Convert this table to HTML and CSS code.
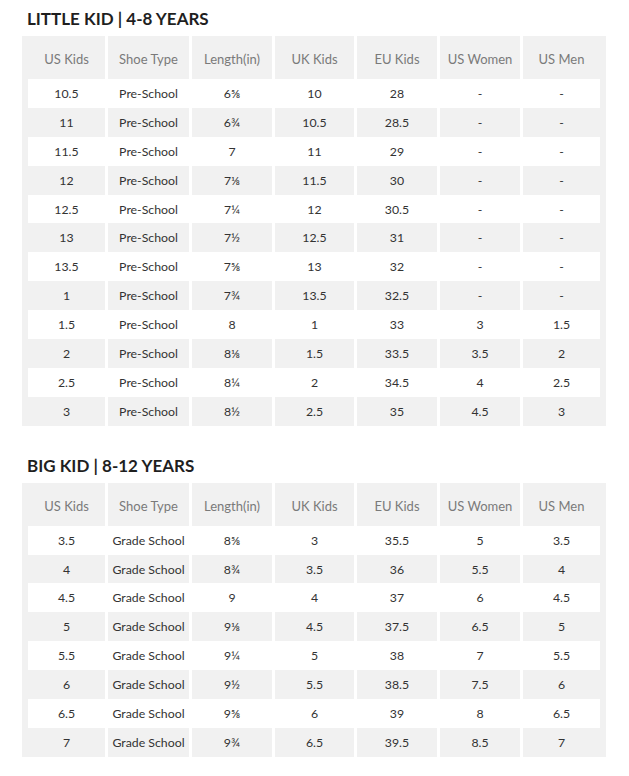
FILE: index.html
```html
<!DOCTYPE html>
<html lang="en">
<head>
<meta charset="utf-8">
<title>Kids Size Chart</title>
<link rel="stylesheet" href="styles.css">
</head>
<body>
<main class="page">
  <section class="chart">
    <h2 class="chart-title">LITTLE KID | 4-8 YEARS</h2>
    <div class="size-table">
      <div class="row head"><div class="cell">US Kids</div><div class="cell">Shoe Type</div><div class="cell">Length(in)</div><div class="cell">UK Kids</div><div class="cell">EU Kids</div><div class="cell">US Women</div><div class="cell">US Men</div></div>
      <div class="row light"><div class="cell">10.5</div><div class="cell">Pre-School</div><div class="cell">6⅝</div><div class="cell">10</div><div class="cell">28</div><div class="cell">-</div><div class="cell">-</div></div>
      <div class="row shade"><div class="cell">11</div><div class="cell">Pre-School</div><div class="cell">6¾</div><div class="cell">10.5</div><div class="cell">28.5</div><div class="cell">-</div><div class="cell">-</div></div>
      <div class="row light"><div class="cell">11.5</div><div class="cell">Pre-School</div><div class="cell">7</div><div class="cell">11</div><div class="cell">29</div><div class="cell">-</div><div class="cell">-</div></div>
      <div class="row shade"><div class="cell">12</div><div class="cell">Pre-School</div><div class="cell">7⅛</div><div class="cell">11.5</div><div class="cell">30</div><div class="cell">-</div><div class="cell">-</div></div>
      <div class="row light"><div class="cell">12.5</div><div class="cell">Pre-School</div><div class="cell">7¼</div><div class="cell">12</div><div class="cell">30.5</div><div class="cell">-</div><div class="cell">-</div></div>
      <div class="row shade"><div class="cell">13</div><div class="cell">Pre-School</div><div class="cell">7½</div><div class="cell">12.5</div><div class="cell">31</div><div class="cell">-</div><div class="cell">-</div></div>
      <div class="row light"><div class="cell">13.5</div><div class="cell">Pre-School</div><div class="cell">7⅝</div><div class="cell">13</div><div class="cell">32</div><div class="cell">-</div><div class="cell">-</div></div>
      <div class="row shade"><div class="cell">1</div><div class="cell">Pre-School</div><div class="cell">7¾</div><div class="cell">13.5</div><div class="cell">32.5</div><div class="cell">-</div><div class="cell">-</div></div>
      <div class="row light"><div class="cell">1.5</div><div class="cell">Pre-School</div><div class="cell">8</div><div class="cell">1</div><div class="cell">33</div><div class="cell">3</div><div class="cell">1.5</div></div>
      <div class="row shade"><div class="cell">2</div><div class="cell">Pre-School</div><div class="cell">8⅛</div><div class="cell">1.5</div><div class="cell">33.5</div><div class="cell">3.5</div><div class="cell">2</div></div>
      <div class="row light"><div class="cell">2.5</div><div class="cell">Pre-School</div><div class="cell">8¼</div><div class="cell">2</div><div class="cell">34.5</div><div class="cell">4</div><div class="cell">2.5</div></div>
      <div class="row shade"><div class="cell">3</div><div class="cell">Pre-School</div><div class="cell">8½</div><div class="cell">2.5</div><div class="cell">35</div><div class="cell">4.5</div><div class="cell">3</div></div>
    </div>
  </section>
  <section class="chart">
    <h2 class="chart-title">BIG KID | 8-12 YEARS</h2>
    <div class="size-table">
      <div class="row head"><div class="cell">US Kids</div><div class="cell">Shoe Type</div><div class="cell">Length(in)</div><div class="cell">UK Kids</div><div class="cell">EU Kids</div><div class="cell">US Women</div><div class="cell">US Men</div></div>
      <div class="row light"><div class="cell">3.5</div><div class="cell">Grade School</div><div class="cell">8⅝</div><div class="cell">3</div><div class="cell">35.5</div><div class="cell">5</div><div class="cell">3.5</div></div>
      <div class="row shade"><div class="cell">4</div><div class="cell">Grade School</div><div class="cell">8¾</div><div class="cell">3.5</div><div class="cell">36</div><div class="cell">5.5</div><div class="cell">4</div></div>
      <div class="row light"><div class="cell">4.5</div><div class="cell">Grade School</div><div class="cell">9</div><div class="cell">4</div><div class="cell">37</div><div class="cell">6</div><div class="cell">4.5</div></div>
      <div class="row shade"><div class="cell">5</div><div class="cell">Grade School</div><div class="cell">9⅛</div><div class="cell">4.5</div><div class="cell">37.5</div><div class="cell">6.5</div><div class="cell">5</div></div>
      <div class="row light"><div class="cell">5.5</div><div class="cell">Grade School</div><div class="cell">9¼</div><div class="cell">5</div><div class="cell">38</div><div class="cell">7</div><div class="cell">5.5</div></div>
      <div class="row shade"><div class="cell">6</div><div class="cell">Grade School</div><div class="cell">9½</div><div class="cell">5.5</div><div class="cell">38.5</div><div class="cell">7.5</div><div class="cell">6</div></div>
      <div class="row light"><div class="cell">6.5</div><div class="cell">Grade School</div><div class="cell">9⅝</div><div class="cell">6</div><div class="cell">39</div><div class="cell">8</div><div class="cell">6.5</div></div>
      <div class="row shade"><div class="cell">7</div><div class="cell">Grade School</div><div class="cell">9¾</div><div class="cell">6.5</div><div class="cell">39.5</div><div class="cell">8.5</div><div class="cell">7</div></div>
    </div>
  </section>
</main>
</body>
</html>
```

FILE: styles.css
```css
* { box-sizing: border-box; }
html, body { margin: 0; padding: 0; background: #ffffff; }
body {
  font-family: Lato, "Liberation Sans", Arial, sans-serif;
  color: #333333;
}
.page {
  padding: 9px 0 0 22px;
  width: 629px;
}
.chart + .chart { margin-top: 30px; }
.chart-title {
  margin: 0 0 7px 5px;
  font-size: 17px;
  line-height: 20px;
  font-weight: 700;
  color: #1f1f1f;
  letter-spacing: 0;
}
.size-table { width: 584px; }
.row {
  display: grid;
  grid-template-columns: 77px 81px 80px 79px 80px 80px 77px;
  column-gap: 3px;
  border: 0 solid #f1f1f1;
  border-width: 0 6px;
  background: #ffffff;
  height: 28.9px;
}
.row.head { height: 43px; }
.cell {
  display: flex;
  align-items: center;
  justify-content: center;
  font-size: 12.3px;
  white-space: nowrap;
}
.head .cell,
.shade .cell { background: #f1f1f1; }
.head .cell {
  color: #7a7a7a;
  font-size: 13px;
  padding-top: 3px;
}
```
